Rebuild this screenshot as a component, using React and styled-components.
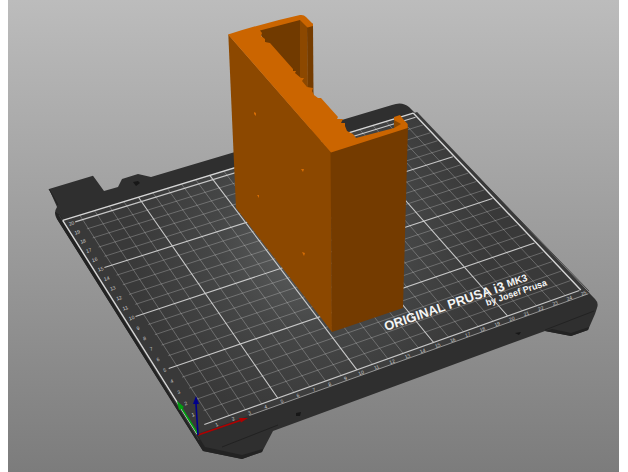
import React from 'react';
import styled, { createGlobalStyle } from 'styled-components';

const GlobalStyle = createGlobalStyle`
  body { margin: 0; background: #fff; font-family: "Liberation Sans", Arial, sans-serif; }
`;

const Page = styled.main`
  display: flex;
  padding: 0 9px 0 8px;
`;

const Viewport = styled.section`
  flex: 1;
  min-width: 0;
  background: linear-gradient(#bcbcbc, #7c7c7c);
`;

const Scene = styled.svg`
  display: block;
  width: 100%;
  height: auto;
`;

const Thin = styled.path`
  fill: none;
  stroke: #fff;
  stroke-opacity: 0.27;
  stroke-width: 0.9;
`;

const Bold = styled.path`
  fill: none;
  stroke: #dedede;
  stroke-opacity: ${(p) => p.$opacity || 0.85};
  stroke-width: ${(p) => p.$width || 1.1};
`;

const Tick = styled.text`
  fill: #ccc;
  font-size: 5px;
  text-anchor: middle;
  dominant-baseline: central;
`;

const BedText = styled.text`
  fill: #f4f4f4;
  font-size: ${(p) => p.$size}px;
  font-weight: 700;
`;

/* Bed coordinates in centimetres, with the screen points of four grid nodes. */
const anchors = [
  [5, 5, 240.3, 344],
  [25, 5, 534.5, 243],
  [5, 15, 172.3, 246],
  [25, 15, 452.8, 156.7],
];

function solve(m) {
  const n = m.length;
  for (let c = 0; c < n; c++) {
    let pivot = c;
    for (let r = c + 1; r < n; r++) if (Math.abs(m[r][c]) > Math.abs(m[pivot][c])) pivot = r;
    [m[c], m[pivot]] = [m[pivot], m[c]];
    for (let r = 0; r < n; r++) {
      if (r === c) continue;
      const f = m[r][c] / m[c][c];
      for (let k = c; k <= n; k++) m[r][k] -= f * m[c][k];
    }
  }
  return m.map((row, i) => row[n] / row[i]);
}

const h = solve(
  anchors.flatMap(([x, y, u, v]) => [
    [x, y, 1, 0, 0, 0, -u * x, -u * y, u],
    [0, 0, 0, x, y, 1, -v * x, -v * y, v],
  ])
);

const project = (x, y) => {
  const w = h[6] * x + h[7] * y + 1;
  return [(h[0] * x + h[1] * y + h[2]) / w, (h[3] * x + h[4] * y + h[5]) / w];
};

const segment = (x1, y1, x2, y2) => {
  const [a, b] = project(x1, y1);
  const [c, d] = project(x2, y2);
  return `M${a.toFixed(1)} ${b.toFixed(1)}L${c.toFixed(1)} ${d.toFixed(1)}`;
};

const range = (from, to) => Array.from({ length: to - from + 1 }, (_, i) => from + i);

const thinLines = [
  ...range(1, 24).filter((x) => x % 5).map((x) => segment(x, 0, x, 20.5)),
  ...range(1, 19).filter((y) => y % 5).map((y) => segment(0.9, y, 25, y)),
].join('');

const boldLines = [
  ...[5, 10, 15, 20].map((x) => segment(x, 0, x, 20.5)),
  ...[0, 5, 10, 15, 20].map((y) => segment(0.5, y, 25, y)),
].join('');

const frameLines = [
  segment(-0.15, -0.5, -0.15, 20.5),
  segment(-0.15, 20.5, 25.1, 20.5),
  segment(25.1, 20.5, 25.1, 0),
].join('');

const surface = [
  [-0.15, -0.5],
  [25.4, -0.5],
  [25.4, 20.5],
  [-0.15, 20.5],
].map(([x, y]) => project(x, y).map((n) => n.toFixed(1)).join(',')).join(' ');

function Ticks() {
  return (
    <g>
      {range(1, 25).map((n) => {
        const [x, y] = project(n + 0.1, -0.3);
        return <Tick key={n} transform={`translate(${x} ${y}) rotate(-20)`}>{n}</Tick>;
      })}
      {range(1, 20).map((n) => {
        const [x, y] = project(0.25, n);
        return <Tick key={n} transform={`translate(${x} ${y}) rotate(-18)`}>{n}</Tick>;
      })}
    </g>
  );
}

function Bed() {
  return (
    <g>
      <path fill="#2f2f2f" d="M49 189L93 175.700L104 191L118 187L122 179L138 174L151 177L235 152L392 105Q402 101 409 107L413 111L595 299Q599 303 597 308L595 314L588 330L571 336L545 331L273 431L262 452L242 459L203 451L57 219Q53 213 57 207Z" />
      <path fill="#232323" d="M55 212L57 219L203 451L242 459L262 452L263 449L242 455L205 447L60 215ZM545 331L571 336L588 330L589 327L571 333L552 329Z" />
      <path fill="none" stroke="#222" d="M222 447L278 425M545 330L594 311M49 189L58 205" />
      <path fill="none" stroke="#3c3c3c" strokeWidth="1" d="M59 215L199 440" />
      <path fill="none" stroke="#4a4a4a" strokeWidth="1" d="M416 113L589 291" />
      <path fill="#171717" d="M133 182L138 181L140 183L136 186ZM296 413L301 412L300 416L296 416ZM515 333L521 332L519 335Z" />
      <polygon points={surface} fill="url(#bedGlow)" />
      <Thin d={thinLines} />
      <Bold d={boldLines} />
      <Bold d={frameLines} $width={1.4} $opacity={0.95} />
      <Bold d={segment(3, -0.5, 25.3, -0.5)} $width={0.8} $opacity={0.7} />
      <Ticks />
      <BedText $size={13} transform="translate(386 331) rotate(-19)">ORIGINAL PRUSA i3</BedText>
      <BedText $size={10} transform="translate(508 287) rotate(-18)">MK3</BedText>
      <BedText $size={9} transform="translate(487 306) rotate(-19)">by Josef Prusa</BedText>
    </g>
  );
}

function Model() {
  return (
    <g>
      <path fill="#713a00" d="M258 30L300 19L302 90L290 85Z" />
      <path fill="#8c4800" d="M300 19L307.500 26L308 98L300 88Z" />
      <path fill="#753c00" d="M307 26L313 23.500L313.500 96L308 96Z" />
      <path fill="#8c4800" d="M228.300 34.500L331 152L332 332L236 208Z" />
      <path fill="#743b00" d="M330.500 152L408 126L403 308L332 332Z" />
      <path fill="#8c4800" d="M394 118L401 122V125L394 129Z" />
      <path fill="#cb6500" d="M228 34.500Q264 23 300 15Q304 14.500 306 17L313 24V26L307.500 27.500L300 20L260 30.500L262 33L261 36L265 39L265 42L270 43L293 69L293 71L296 71L295 73L301 78L304 78L302 81L307 87L313 88L312 91L314 95L318 98L321 98L338 117L337 119L343 119L341 123L345 123V126L347 131L353 134L356 138L394 128L401 124L394 120V117L400 115L403 119L407.700 124V128L331 152.500Z" />
      <g fill="#d56c04">
        <path d="M254 112L256 113V116L254 114Z" />
        <path d="M257 195L259 195V198Z" />
        <path d="M301 169L304 169L303 172Z" />
        <path d="M302 252L305 253L304 256Z" />
      </g>
    </g>
  );
}

function Axes() {
  return (
    <g strokeWidth="1.6" fill="none">
      <path stroke="#b00000" d="M198 435L240 420.500" />
      <path fill="#b00000" d="M239 418L248 418L241 422.500Z" />
      <path stroke="#00a010" d="M198 434L181 407" />
      <path fill="#00a010" d="M177 401L184 407L179 410Z" />
      <path stroke="#00008c" d="M198 435L196 404" />
      <path fill="#00008c" d="M196 396L199 404H193Z" />
    </g>
  );
}

export default function App() {
  return (
    <>
      <GlobalStyle />
      <Page>
        <Viewport aria-label="3D print preview">
          <Scene viewBox="8 0 611 472" role="img" aria-label="Orange part on a print bed">
            <defs>
              <radialGradient id="bedGlow" gradientUnits="userSpaceOnUse" cx="310" cy="240" r="180">
                <stop offset="0" stopColor="#606262" />
                <stop offset="0.5" stopColor="#464747" />
                <stop offset="1" stopColor="#393939" />
              </radialGradient>
            </defs>
            <Bed />
            <Model />
            <Axes />
          </Scene>
        </Viewport>
      </Page>
    </>
  );
}
